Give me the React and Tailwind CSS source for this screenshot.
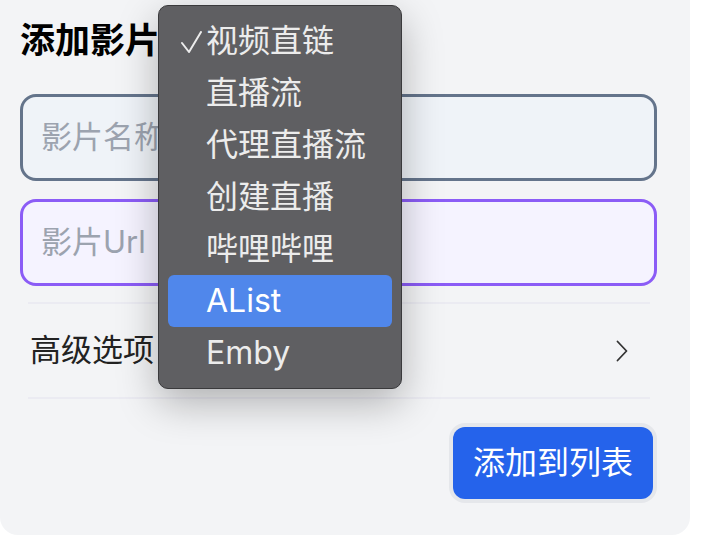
const FONT = { fontFamily: 'Inter, "Noto Sans CJK SC", sans-serif' }

const OPTIONS = ['视频直链', '直播流', '代理直播流', '创建直播', '哔哩哔哩', 'AList', 'Emby']

function Menu() {
  return <div className="absolute left-[158px] top-[5px] w-[244px] rounded-[10px] border border-[#3a3a3c] bg-[#5f5f62] px-[9px] py-[9px] shadow-[0_14px_40px_rgba(0,0,0,0.28)]">
    {OPTIONS.map((o, i) => <div key={o} className={`relative flex h-[52px] items-center rounded-[6px] pl-[38px] text-[32px] ${o==='AList'?'bg-[#5087eb] text-white':'text-[#ececec]'}`}>
      {i===0 && <svg className="absolute left-[12px] top-[16px]" width="22" height="22" viewBox="0 0 22 22" fill="none" stroke="#ececec" strokeWidth="2" strokeLinecap="round" strokeLinejoin="round"><path d="M2 12 L9 21 L21 1"/></svg>}
      <span className="leading-none">{o}</span>
    </div>)}
  </div>
}

export default function App() {
  return <div className="relative h-[558px] w-[702px] bg-white" style={FONT}>
    <div className="h-[535px] w-[690px] rounded-b-[18px] bg-[#f3f4f6] px-[20px] pt-[20px]">
      <h2 className="text-[35px] font-bold leading-[40px] text-black">添加影片</h2>

      <div className="mt-[34px] flex h-[87px] w-[637px] items-center rounded-[16px] border-[3px] border-[#64748b] bg-[#eff3f8] pl-[18px] text-[31px] text-[#9ca3af]">影片名称</div>
      <div className="mt-[18px] flex h-[87px] w-[637px] items-center rounded-[16px] border-[3px] border-[#8b5cf6] bg-[#f5f3ff] pl-[18px] text-[31px] text-[#9ca3af]">影片Url</div>

      <div className="ml-[8px] mt-[16px] w-[622px]">
        <div className="h-[2px] bg-[#ebebf2]" />
        <div className="flex h-[93px] items-center justify-between pl-[2px] pr-[22px]">
          <span className="text-[31px] text-[#222]">高级选项</span>
          <svg width="12" height="22" viewBox="0 0 12 22" fill="none" stroke="#333" strokeWidth="1.8" strokeLinecap="round" strokeLinejoin="round"><path d="M1.5 1.5 L10.5 11 L1.5 20.5"/></svg>
        </div>
        <div className="h-[2px] bg-[#ebebf2]" />
      </div>

      <div className="mt-[24px] flex w-[637px] justify-end">
        <button className="flex h-[80px] items-center rounded-[16px] bg-[#e5e7eb] p-[4px]">
          <span className="flex h-full items-center rounded-[12px] bg-[#2563eb] px-[20px] text-[32px] text-white">添加到列表</span>
        </button>
      </div>
    </div>
    <Menu />
  </div>
}
